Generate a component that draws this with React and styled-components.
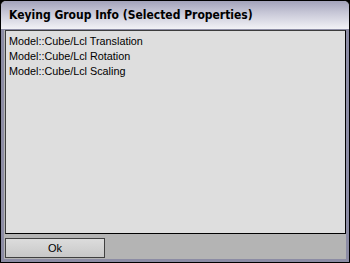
import React from "react";
import styled, { createGlobalStyle } from "styled-components";

const GlobalStyle = createGlobalStyle`
  html, body {
    margin: 0;
    padding: 0;
    background: #000;
  }
  * {
    box-sizing: border-box;
  }
`;

const properties = [
  "Model::Cube/Lcl Translation",
  "Model::Cube/Lcl Rotation",
  "Model::Cube/Lcl Scaling",
];

function App() {
  return (
    <>
      <GlobalStyle />
      <Window>
        <TitleBar>Keying Group Info (Selected Properties)</TitleBar>
        <Frame>
          <List>
            {properties.map((p) => (
              <Item key={p}>{p}</Item>
            ))}
          </List>
          <Footer>
            <Button>Ok</Button>
          </Footer>
        </Frame>
      </Window>
    </>
  );
}

export default App;

const Window = styled.div`
  width: 350px;
  height: 263px;
  border: 1px solid #000;
  border-radius: 6px 6px 0 0;
  overflow: hidden;
  display: flex;
  flex-direction: column;
  background: #b4b4b4;
`;

const TitleBar = styled.div`
  height: 28px;
  flex: none;
  padding: 5px 0 0 8px;
  background: linear-gradient(#a2a2ba 0%, #c6c6d6 40%, #f2f2f6 100%);
  font-family: "DejaVu Sans Condensed", "DejaVu Sans", sans-serif;
  font-size: 12px;
  font-weight: bold;
  line-height: 18px;
  color: #000;
  white-space: nowrap;
`;

const Frame = styled.div`
  flex: 1;
  display: flex;
  flex-direction: column;
  border: 3px solid #8c8ca4;
  border-top: 1px solid #8c8ca4;
  padding: 0 0 1px 0;
  background: #b4b4b4;
`;

const List = styled.div`
  flex: 1;
  margin-left: 1px;
  padding: 3px 0 0 3px;
  background: #dedede;
  border: 1px solid #000;
  border-top-color: #3c3c3c;
  border-left-color: #3c3c3c;
  font-family: "Liberation Sans", Arial, sans-serif;
  font-size: 10.8px;
  line-height: 15px;
  color: #000;
`;

const Item = styled.div`
  white-space: nowrap;
`;

const Footer = styled.div`
  height: 24px;
  flex: none;
  display: flex;
  align-items: flex-end;
  padding-left: 1px;
`;

const Button = styled.button`
  width: 100px;
  height: 20px;
  padding: 0;
  border: 1px solid #404040;
  background: linear-gradient(#dcdcdc, #c8c8c8);
  font-family: "Liberation Sans", Arial, sans-serif;
  font-size: 11px;
  color: #000;
`;
